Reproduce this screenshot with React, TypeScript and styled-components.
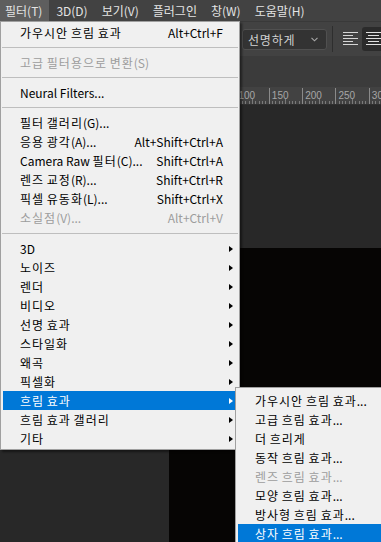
import React from 'react';
import styled, { createGlobalStyle } from 'styled-components';

const Global = createGlobalStyle`
  html, body { margin: 0; padding: 0; background: #282828; }
  body { font-family: "Noto Sans CJK KR", "Noto Sans", sans-serif; }
`;

const Screen = styled.div`
  position: relative;
  width: 381px;
  height: 542px;
  overflow: hidden;
  background: #282828;
  display: flex;
  flex-direction: column;
`;

const MenuBar = styled.div`
  height: 21px;
  flex: none;
  background: #424242;
  display: flex;
  align-items: stretch;
  font-size: 12px;
  color: #e4e4e4;
`;

const MenuBarItem = styled.div<{ $active?: boolean }>`
  display: flex;
  align-items: center;
  padding: 0 7px 0 5px;
  margin-right: 2px;
  background: ${(p) => (p.$active ? '#5e5e5e' : 'transparent')};
`;

const OptionsBar = styled.div`
  height: 35px;
  flex: none;
  background: #424242;
  display: flex;
  align-items: center;
  padding-left: 242px;
  border-top: 1px solid #393939;
  box-sizing: border-box;
`;

const Dropdown = styled.div`
  width: 85px;
  height: 21px;
  flex: none;
  box-sizing: border-box;
  background: #333333;
  border: 1px solid #505050;
  border-radius: 3px;
  display: flex;
  align-items: center;
  justify-content: space-between;
  padding: 0 8px 0 5px;
  font-size: 12px;
  color: #d2d2d2;
`;

const VSep = styled.div`
  width: 1px;
  height: 26px;
  background: #2e2e2e;
  margin-left: 5px;
  flex: none;
`;

const IconBtn = styled.div<{ $pressed?: boolean }>`
  width: 22px;
  height: 24px;
  flex: none;
  display: flex;
  align-items: center;
  justify-content: center;
  margin-left: ${(p) => (p.$pressed ? '1px' : '6px')};
  border-radius: 3px;
  background: ${(p) => (p.$pressed ? '#2b2b2b' : 'transparent')};
`;

const TabBar = styled.div`
  height: 31px;
  flex: none;
  background: #3b3b3b;
`;

const RulerBar = styled.div`
  height: 18px;
  flex: none;
  background: #424242;
  border-bottom: 1px solid #2f2f2f;
  box-sizing: border-box;
`;

const Workspace = styled.div`
  flex: 1;
  display: flex;
  padding: 143px 0 0 169px;
  background: #282828;
  min-height: 0;
`;

const DocCanvas = styled.div`
  flex: 1;
  background: #060504;
`;

const Menu = styled.div<{ $left: number; $top: number; $width: number; $padTop: number }>`
  position: absolute;
  left: ${(p) => p.$left}px;
  top: ${(p) => p.$top}px;
  width: ${(p) => p.$width}px;
  box-sizing: border-box;
  background: #f0f0f0;
  border: 1px solid #a0a0a0;
  padding: ${(p) => p.$padTop}px 2px 1px 2px;
  box-shadow: 2px 2px 2px rgba(0, 0, 0, 0.45);
  font-size: 12px;
  color: #000;
`;

const Item = styled.div<{ $disabled?: boolean; $selected?: boolean; $arrow?: boolean }>`
  height: 19px;
  display: flex;
  align-items: center;
  padding: 0 ${(p) => (p.$arrow ? 4 : 14)}px 0 17px;
  white-space: nowrap;
  color: ${(p) => (p.$selected ? '#fff' : p.$disabled ? '#9d9d9d' : '#000')};
  background: ${(p) => (p.$selected ? '#0078d7' : 'transparent')};
`;

const Label = styled.span`
  flex: 1;
`;

const Ko = styled.span<{ $sp?: number }>`
  letter-spacing: ${(p) => p.$sp ?? 1}px;
`;

const Shortcut = styled.span`
  margin-left: 12px;
`;

const Arrow = styled.span<{ $light?: boolean }>`
  width: 0;
  height: 0;
  border-left: 4px solid ${(p) => (p.$light ? '#fff' : '#000')};
  border-top: 3.5px solid transparent;
  border-bottom: 3.5px solid transparent;
`;

const Separator = styled.div<{ $h: number }>`
  height: ${(p) => p.$h}px;
  display: flex;
  align-items: center;
  margin: 0 -1px;
  &::after {
    content: '';
    flex: 1;
    height: 1px;
    background: #bebebe;
  }
`;

const hangulText = (s: string, sp?: number) =>
  s.split(/([\uAC00-\uD7A3]+)/).map((part, i) =>
    /[\uAC00-\uD7A3]/.test(part) ? (
      <Ko key={i} $sp={sp}>
        {part}
      </Ko>
    ) : (
      <React.Fragment key={i}>{part}</React.Fragment>
    )
  );

type Entry =
  | { sep: number }
  | { label: string; shortcut?: string; disabled?: boolean; arrow?: boolean; selected?: boolean };

const mainItems: Entry[] = [
  { label: '가우시안 흐림 효과', shortcut: 'Alt+Ctrl+F' },
  { sep: 11 },
  { label: '고급 필터용으로 변환(S)', disabled: true },
  { sep: 11 },
  { label: 'Neural Filters...' },
  { sep: 11 },
  { label: '필터 갤러리(G)...' },
  { label: '응용 광각(A)...', shortcut: 'Alt+Shift+Ctrl+A' },
  { label: 'Camera Raw 필터(C)...', shortcut: 'Shift+Ctrl+A' },
  { label: '렌즈 교정(R)...', shortcut: 'Shift+Ctrl+R' },
  { label: '픽셀 유동화(L)...', shortcut: 'Shift+Ctrl+X' },
  { label: '소실점(V)...', shortcut: 'Alt+Ctrl+V', disabled: true },
  { sep: 12 },
  { label: '3D', arrow: true },
  { label: '노이즈', arrow: true },
  { label: '렌더', arrow: true },
  { label: '비디오', arrow: true },
  { label: '선명 효과', arrow: true },
  { label: '스타일화', arrow: true },
  { label: '왜곡', arrow: true },
  { label: '픽셀화', arrow: true },
  { label: '흐림 효과', arrow: true, selected: true },
  { label: '흐림 효과 갤러리', arrow: true },
  { label: '기타', arrow: true },
];

const blurItems: Entry[] = [
  { label: '가우시안 흐림 효과...' },
  { label: '고급 흐림 효과...' },
  { label: '더 흐리게' },
  { label: '동작 흐림 효과...' },
  { label: '렌즈 흐림 효과...', disabled: true },
  { label: '모양 흐림 효과...' },
  { label: '방사형 흐림 효과...' },
  { label: '상자 흐림 효과...', selected: true },
];

const renderEntries = (entries: Entry[]) =>
  entries.map((e, i) =>
    'sep' in e ? (
      <Separator key={i} $h={e.sep} />
    ) : (
      <Item key={i} $disabled={e.disabled} $selected={e.selected} $arrow={e.arrow}>
        <Label>{hangulText(e.label)}</Label>
        {e.shortcut && <Shortcut>{e.shortcut}</Shortcut>}
        {e.arrow && <Arrow $light={e.selected} />}
      </Item>
    )
  );

const Ruler = () => {
  const major = 33.333;
  const origin = 236;
  const ticks: React.ReactNode[] = [];
  for (let k = -7; k <= 5; k++) {
    const x = origin + major * k;
    ticks.push(<line key={`M${k}`} x1={x} y1={1} x2={x} y2={17} stroke="#8a8a8a" strokeWidth={1} />);
    for (let m = 1; m < 10; m++) {
      const mx = x + (major / 10) * m;
      const h = m === 5 ? 5 : 3;
      ticks.push(<line key={`m${k}-${m}`} x1={mx} y1={17 - h} x2={mx} y2={17} stroke="#7a7a7a" strokeWidth={1} />);
    }
    if (k >= 0) {
      ticks.push(
        <text key={`t${k}`} x={x + 2.5} y={12} fontSize={10} fill="#a6a6a6" fontFamily="Liberation Sans, sans-serif">
          {100 + 50 * k}
        </text>
      );
    }
  }
  return (
    <svg width={381} height={17} style={{ display: 'block' }} shapeRendering="crispEdges">
      {ticks}
    </svg>
  );
};

const AlignLeftIcon = () => (
  <svg width="15" height="14" viewBox="0 0 15 14" shapeRendering="crispEdges">
    <g fill="#d6d6d6">
      <rect x="0" y="0" width="15" height="1" />
      <rect x="0" y="3" width="10" height="1" />
      <rect x="0" y="6" width="15" height="1" />
      <rect x="0" y="9" width="10" height="1" />
      <rect x="0" y="12" width="15" height="1" />
    </g>
  </svg>
);

const AlignCenterIcon = () => (
  <svg width="15" height="14" viewBox="0 0 15 14" shapeRendering="crispEdges">
    <g fill="#e0e0e0">
      <rect x="0" y="0" width="15" height="1" />
      <rect x="2" y="3" width="11" height="1" />
      <rect x="0" y="6" width="15" height="1" />
      <rect x="2" y="9" width="11" height="1" />
      <rect x="0" y="12" width="15" height="1" />
    </g>
  </svg>
);

const Chevron = () => (
  <svg width="7" height="5" viewBox="0 0 7 5">
    <path d="M0.5 0.8 L3.5 3.8 L6.5 0.8" fill="none" stroke="#a8a8a8" strokeWidth="1.1" />
  </svg>
);

export default function App() {
  return (
    <>
      <Global />
      <Screen>
        <MenuBar>
          <MenuBarItem $active>필터(T)</MenuBarItem>
          <MenuBarItem>3D(D)</MenuBarItem>
          <MenuBarItem>보기(V)</MenuBarItem>
          <MenuBarItem>플러그인</MenuBarItem>
          <MenuBarItem>창(W)</MenuBarItem>
          <MenuBarItem>도움말(H)</MenuBarItem>
        </MenuBar>
        <OptionsBar>
          <Dropdown>
            <span>{hangulText('선명하게', 0.8)}</span>
            <Chevron />
          </Dropdown>
          <VSep />
          <IconBtn>
            <AlignLeftIcon />
          </IconBtn>
          <IconBtn $pressed>
            <AlignCenterIcon />
          </IconBtn>
        </OptionsBar>
        <TabBar />
        <RulerBar>
          <Ruler />
        </RulerBar>
        <Workspace>
          <DocCanvas />
        </Workspace>

        <Menu $left={0} $top={21} $width={240} $padTop={1}>
          {renderEntries(mainItems)}
        </Menu>
        <Menu $left={235} $top={387} $width={162} $padTop={3}>
          {renderEntries(blurItems)}
        </Menu>
      </Screen>
    </>
  );
}
